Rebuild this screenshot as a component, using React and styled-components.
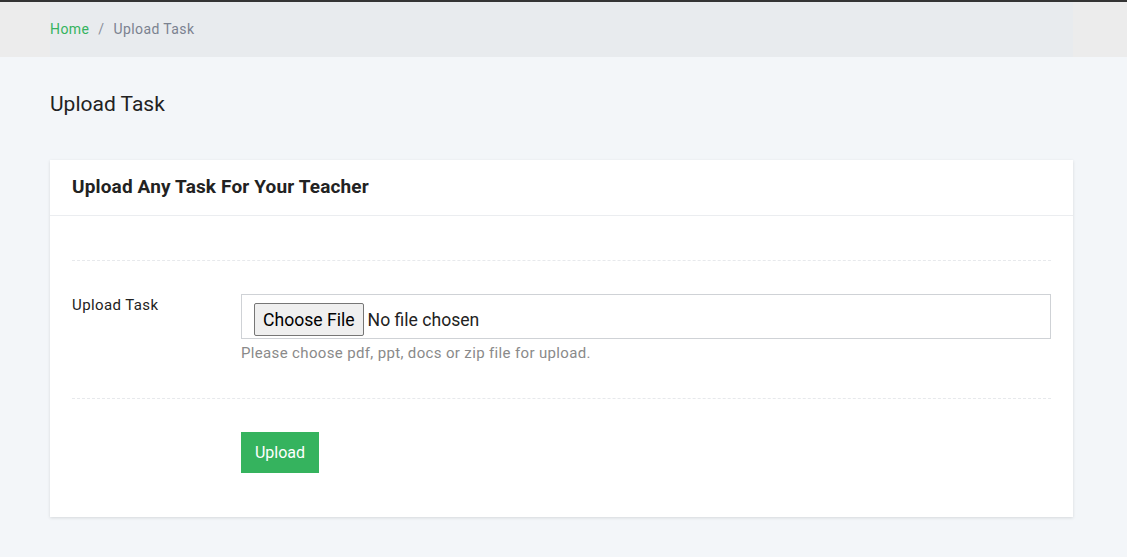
import React from 'react';
import styled, { createGlobalStyle } from 'styled-components';

const GlobalStyle = createGlobalStyle`
  body {
    margin: 0;
    background: #f3f6f9;
    font-family: Roboto, "Liberation Sans", sans-serif;
    color: #222;
  }
`;

const Page = styled.div`
  border-top: 2px solid #343434;
  min-height: 555px;
`;

const CrumbBand = styled.div`
  background: #ececec;
`;

const Crumbs = styled.div`
  margin: 0 54px 0 50px;
  height: 55px;
  box-sizing: border-box;
  padding-bottom: 1px;
  background: #e8ebee;
  display: flex;
  align-items: center;
  font-size: 14px;
  letter-spacing: 0.4px;
  color: #7b8290;
`;

const CrumbLink = styled.a`
  color: #35b35e;
  text-decoration: none;
`;

const Sep = styled.span`
  margin: 0 9px;
  color: #8a8f99;
`;

const Content = styled.div`
  padding: 34px 54px 40px 50px;
`;

const Title = styled.h1`
  margin: 0 0 43px;
  font-size: 21px;
  font-weight: 400;
  line-height: 26px;
  color: #222;
`;

const Card = styled.div`
  background: #fff;
  box-shadow: 0 1px 3px rgba(0, 0, 0, 0.12);
`;

const CardHeader = styled.div`
  height: 56px;
  box-sizing: border-box;
  padding: 0 22px 2px;
  display: flex;
  align-items: center;
  border-bottom: 1px solid #ebedf0;
  font-size: 19px;
  letter-spacing: 0.15px;
  font-weight: 700;
  color: #222;
`;

const CardBody = styled.div`
  padding: 44px 22px 44px;
`;

const Row = styled.div`
  display: grid;
  grid-template-columns: 169px 1fr;
  border-top: 1px dashed #e7e9ec;
  padding: ${p => p.$pad};
`;

const Label = styled.label`
  font-size: 15px;
  letter-spacing: 0.4px;
  line-height: 20px;
  padding-top: 1px;
  color: #222;
`;

const FileBox = styled.input`
  display: block;
  width: 100%;
  box-sizing: border-box;
  height: 45px;
  border: 1px solid #cfd2d6;
  padding: 8px 12px 2px;
  font-family: Roboto, "Liberation Sans", sans-serif;
  font-size: 17.6px;
  color: #222;
  background: #fff;

  &::file-selector-button {
    height: 33px;
    padding: 0 8px;
    margin-right: 4px;
    border: 1px solid #767676;
    border-radius: 2px;
    background: #efefef;
    color: #000;
    font: inherit;
  }
`;

const Help = styled.div`
  margin-top: 6px;
  font-size: 15px;
  letter-spacing: 0.35px;
  color: #8a8a8a;
  line-height: 16px;
`;

const Button = styled.button`
  width: 78px;
  height: 41px;
  border: none;
  background: #35b35e;
  color: #fff;
  font-family: Roboto, "Liberation Sans", sans-serif;
  font-size: 16px;
  font-weight: 400;
  cursor: pointer;
`;

export default function App() {
  return (
    <>
      <GlobalStyle />
      <Page>
        <CrumbBand>
          <Crumbs>
            <CrumbLink href="#">Home</CrumbLink>
            <Sep>/</Sep>
            <span>Upload Task</span>
          </Crumbs>
        </CrumbBand>
        <Content>
          <Title>Upload Task</Title>
          <Card>
            <CardHeader>Upload Any Task For Your Teacher</CardHeader>
            <CardBody>
              <Row $pad="33px 0 37px">
                <Label>Upload Task</Label>
                <div>
                  <FileBox type="file" />
                  <Help>Please choose pdf, ppt, docs or zip file for upload.</Help>
                </div>
              </Row>
              <Row $pad="33px 0 0">
                <div />
                <div>
                  <Button>Upload</Button>
                </div>
              </Row>
            </CardBody>
          </Card>
        </Content>
      </Page>
    </>
  );
}
